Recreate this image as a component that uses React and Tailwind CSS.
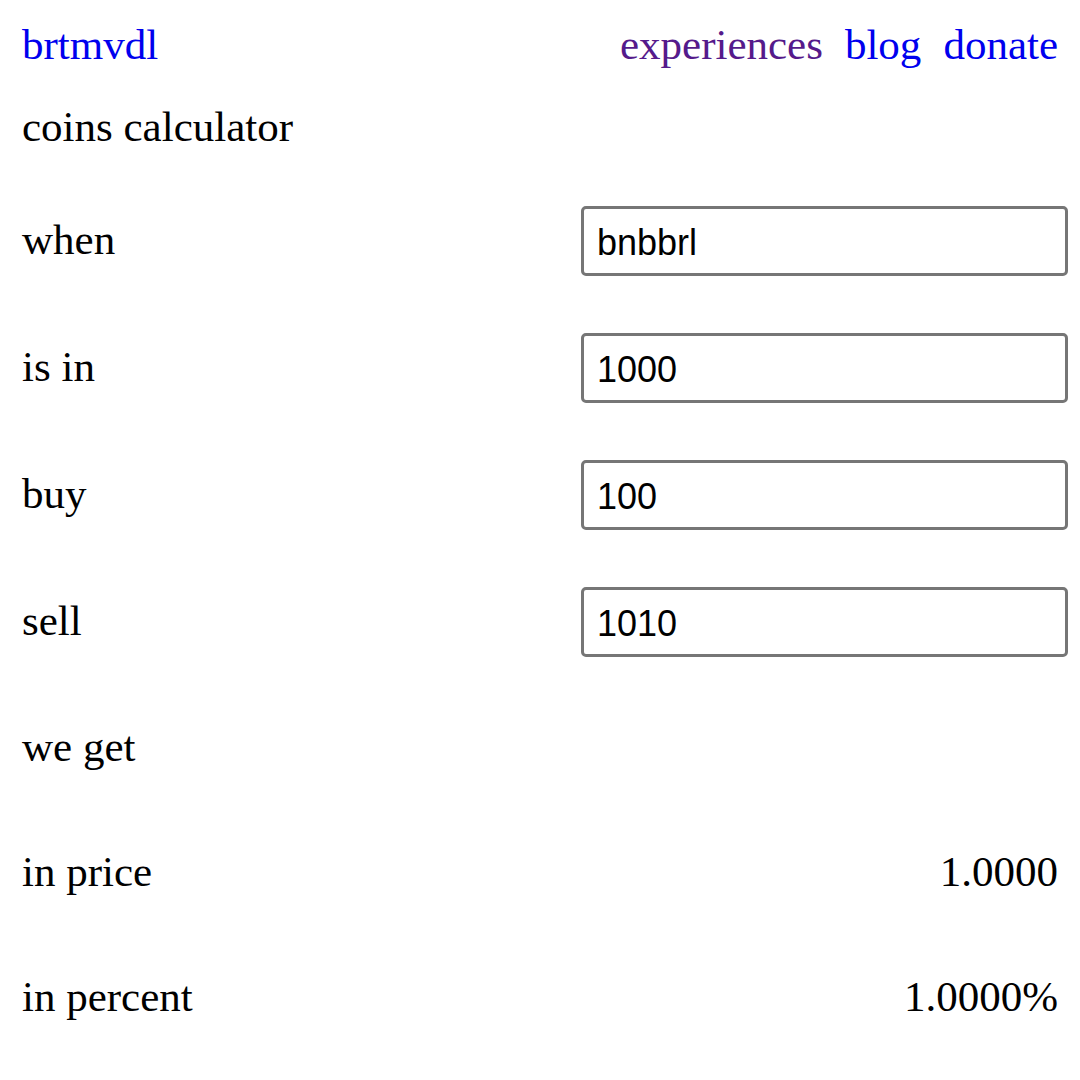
export default function App() {
  const rows = [
    { label: "when", value: "bnbbrl" },
    { label: "is in", value: "1000" },
    { label: "buy", value: "100" },
    { label: "sell", value: "1010" },
  ];
  return (
    <div
      className="w-[1080px] h-[1080px] bg-white text-black text-[43px] leading-[50px] overflow-hidden"
      style={{ fontFamily: '"Liberation Serif", "Times New Roman", serif' }}
    >
      <div className="pl-[22px] pr-[22px] pt-[20px] flex justify-between items-center h-[70px]">
        <a className="text-[#0000ee]">brtmvdl</a>
        <div className="flex gap-[22px]">
          <a className="text-[#551a8b]">experiences</a>
          <a className="text-[#0000ee]">blog</a>
          <a className="text-[#0000ee]">donate</a>
        </div>
      </div>
      <div className="pl-[22px] mt-[32px] h-[50px] flex items-center">coins calculator</div>
      <div className="mt-[24px]">
        {rows.map((r) => (
          <div key={r.label} className="h-[127px] flex items-center justify-between pl-[22px] pr-[12px]">
            <span>{r.label}</span>
            <div
              className="w-[487px] h-[70px] mt-[3px] border-[3px] border-[#767676] rounded-[5px] flex items-center pl-[13px] pt-[3px] text-[36px] text-black"
              style={{ fontFamily: '"Liberation Sans", Arial, sans-serif' }}
            >
              {r.value}
            </div>
          </div>
        ))}
        <div className="h-[125px] flex items-center pl-[22px]">we get</div>
        <div className="h-[125px] flex items-center justify-between pl-[22px] pr-[22px]">
          <span>in price</span>
          <span>1.0000</span>
        </div>
        <div className="h-[125px] flex items-center justify-between pl-[22px] pr-[22px]">
          <span>in percent</span>
          <span>1.0000%</span>
        </div>
      </div>
    </div>
  );
}
